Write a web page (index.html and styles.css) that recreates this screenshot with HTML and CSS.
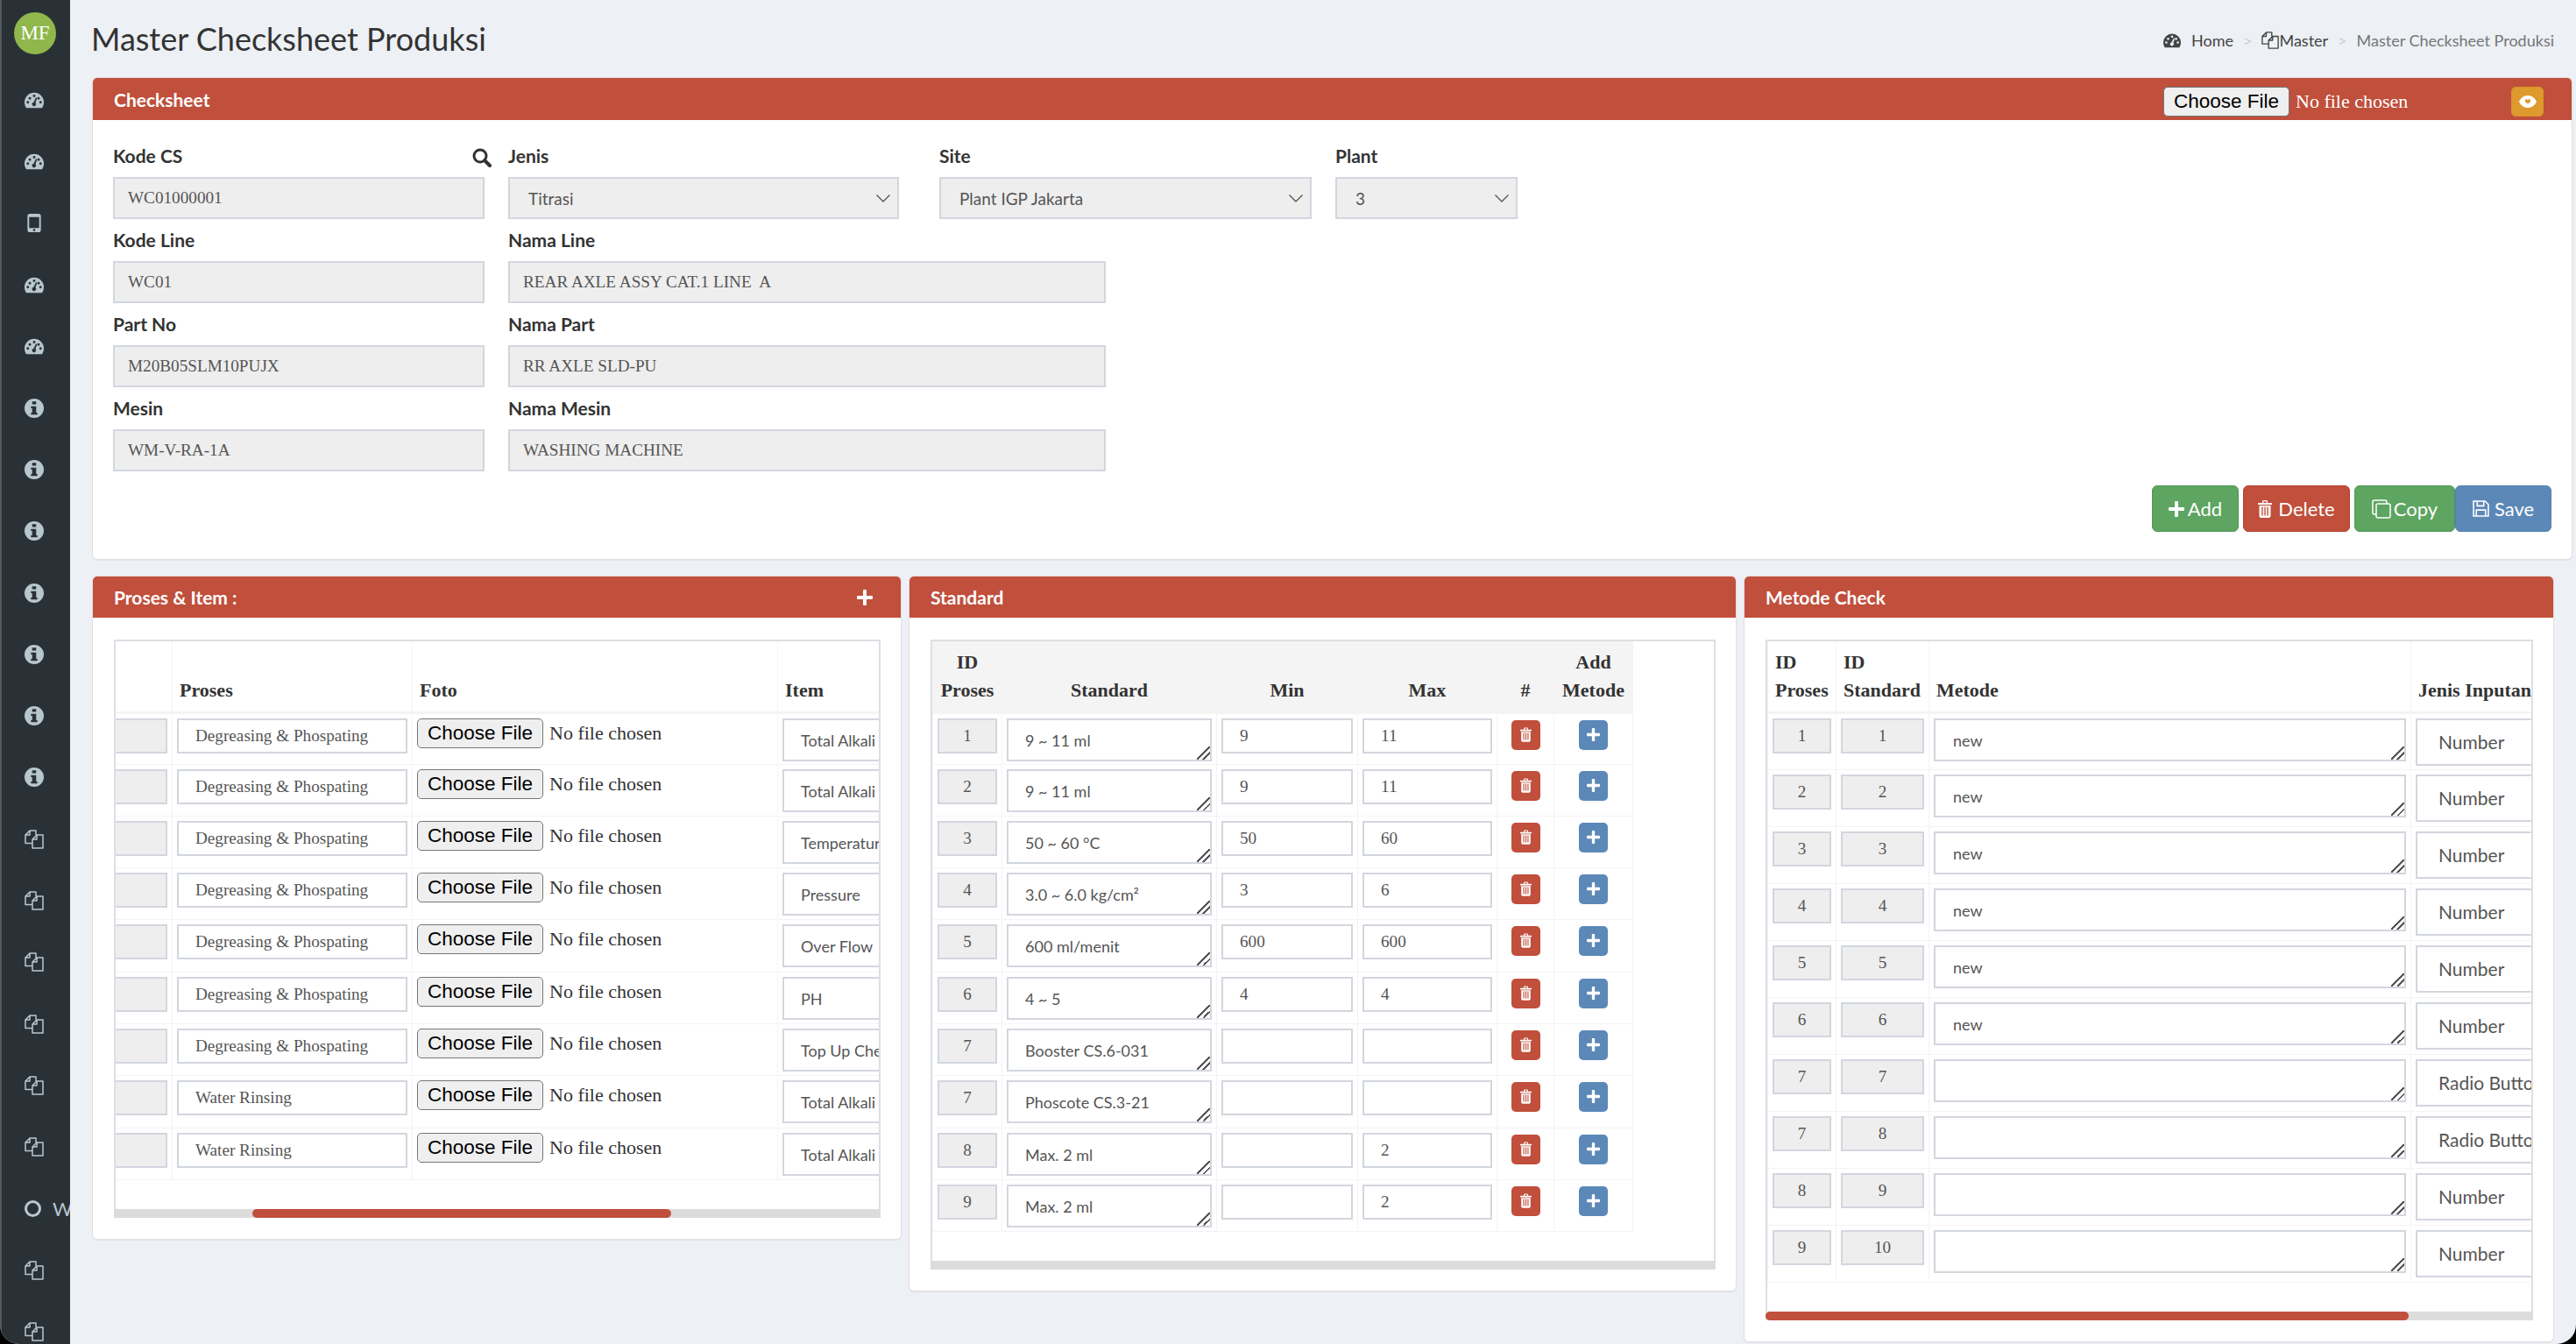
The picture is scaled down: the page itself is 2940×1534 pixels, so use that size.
FILE: index.html
```html
<!DOCTYPE html>
<html lang="en">

<head>
  <meta charset="UTF-8">
  <meta name="viewport" content="width=device-width, initial-scale=1.0">
  <title>Master Checksheet Produksi</title>
  <link rel="stylesheet" href="styles.css">
</head>

<body>
  <svg class="sprite" xmlns="http://www.w3.org/2000/svg">
    <symbol id="i-gauge" viewBox="0 0 24 20">
      <path fill="currentColor" fill-rule="evenodd" d="M12 1A12 12 0 0 0 0 13c0 2.3.6 4.4 1.7 6.3.2.4.6.7 1.100.7h18.400c.5 0 .9-.3 1.100-.7 1.100-1.900 1.700-4 1.700-6.300A12 12 0 0 0 12 1zM2.500 13a1.600 1.600 0 1 0 3.200 0a1.600 1.600 0 1 0-3.200 0zM5 8a1.600 1.600 0 1 0 3.200 0a1.600 1.600 0 1 0-3.200 0zM10.400 5a1.600 1.600 0 1 0 3.200 0a1.600 1.600 0 1 0-3.200 0zM18.300 13a1.600 1.600 0 1 0 3.200 0a1.600 1.600 0 1 0-3.200 0zM15.900 8a1.600 1.600 0 1 0 3.200 0a1.600 1.600 0 1 0-3.200 0zM14.200 7l-2.900 5.900a2.400 2.400 0 1 0 2.300.7L15.700 7.500z" />
    </symbol>
    <symbol id="i-info" viewBox="0 0 24 24">
      <path fill="currentColor" fill-rule="evenodd" d="M12 0a12 12 0 1 0 0 24a12 12 0 1 0 0-24zM9.500 3.500h5V7h-5zM8 9.500h6.500v8H16V20H8v-2.500h1.500v-5.500H8z" />
    </symbol>
    <symbol id="i-mobile" viewBox="0 0 16 22">
      <path fill="currentColor" fill-rule="evenodd" d="M3 0h10a3 3 0 0 1 3 3v16a3 3 0 0 1-3 3H3a3 3 0 0 1-3-3V3a3 3 0 0 1 3-3zM2 4v13h12V4zM6.500 19.500a1.500 1.500 0 1 0 3 0a1.500 1.500 0 1 0-3 0z" />
    </symbol>
    <symbol id="i-files" viewBox="0 0 22 22">
      <path fill="none" stroke="currentColor" stroke-width="1.500" stroke-linejoin="round" d="M9 15.500H1V6l5-5h7v5M6 1v5H1M14 6h7v15H9V11zM14 6v5H9" />
    </symbol>
    <symbol id="i-search" viewBox="0 0 22 22">
      <circle cx="9" cy="9" r="7" fill="none" stroke="currentColor" stroke-width="3" />
      <path d="M14 14l6 6" stroke="currentColor" stroke-width="4" stroke-linecap="round" />
    </symbol>
    <symbol id="i-eye" viewBox="0 0 20 14">
      <path fill="currentColor" fill-rule="evenodd" d="M10 0C5 0 1.500 3.500 0 7c1.500 3.500 5 7 10 7s8.500-3.500 10-7C18.500 3.500 15 0 10 0zM7 6a3 3 0 1 0 6 0a3 3 0 0 0-1.500-2.500a1.500 1.500 0 0 1-3 0A3 3 0 0 0 7 6z" />
    </symbol>
    <symbol id="i-plus" viewBox="0 0 18 18">
      <path fill="currentColor" d="M7 1a1 1 0 0 1 1-1h2a1 1 0 0 1 1 1v6h6a1 1 0 0 1 1 1v2a1 1 0 0 1-1 1h-6v6a1 1 0 0 1-1 1H8a1 1 0 0 1-1-1v-6H1a1 1 0 0 1-1-1V8a1 1 0 0 1 1-1h6z" />
    </symbol>
    <symbol id="i-trash" viewBox="0 0 16 20">
      <path fill="currentColor" fill-rule="evenodd" d="M5 3V1.500C5 .7 5.700 0 6.500 0h3c.8 0 1.500.7 1.500 1.500V3h4.500a.5.5 0 0 1 .5.500V5H0V3.500A.5.5 0 0 1 .5 3zM6.300 3h3.400V1.300H6.300zM1.500 6h13v12c0 1.100-.9 2-2 2h-9c-1.100 0-2-.9-2-2zM4.300 7.500v10h1.400v-10zM7.300 7.500v10h1.400v-10zM10.300 7.500v10h1.400v-10z" />
    </symbol>
    <symbol id="i-copy" viewBox="0 0 22 22">
      <path fill="none" stroke="currentColor" stroke-width="1.500" d="M17 5V3a2 2 0 0 0-2-2H3a2 2 0 0 0-2 2v12a2 2 0 0 0 2 2h2M7 5h12a2 2 0 0 1 2 2v12a2 2 0 0 1-2 2H7a2 2 0 0 1-2-2V7a2 2 0 0 1 2-2z" />
    </symbol>
    <symbol id="i-save" viewBox="0 0 18 18">
      <path fill="none" stroke="currentColor" stroke-width="1.500" d="M1 1h12.500L17 4.500V17H1zM5 1v5h7V1M4 17v-6.500h10V17" />
    </symbol>
  </svg>

  <div class="window">
    <aside class="sidebar">
      <div class="avatar">MF</div>
      <a class="nav-item"><svg class="nav-icon"><use href="#i-gauge" /></svg></a>
      <a class="nav-item"><svg class="nav-icon"><use href="#i-gauge" /></svg></a>
      <a class="nav-item"><svg class="nav-icon nav-icon-phone"><use href="#i-mobile" /></svg></a>
      <a class="nav-item"><svg class="nav-icon"><use href="#i-gauge" /></svg></a>
      <a class="nav-item"><svg class="nav-icon"><use href="#i-gauge" /></svg></a>
      <a class="nav-item"><svg class="nav-icon"><use href="#i-info" /></svg></a>
      <a class="nav-item"><svg class="nav-icon"><use href="#i-info" /></svg></a>
      <a class="nav-item"><svg class="nav-icon"><use href="#i-info" /></svg></a>
      <a class="nav-item"><svg class="nav-icon"><use href="#i-info" /></svg></a>
      <a class="nav-item"><svg class="nav-icon"><use href="#i-info" /></svg></a>
      <a class="nav-item"><svg class="nav-icon"><use href="#i-info" /></svg></a>
      <a class="nav-item"><svg class="nav-icon"><use href="#i-info" /></svg></a>
      <a class="nav-item"><svg class="nav-icon"><use href="#i-files" /></svg></a>
      <a class="nav-item"><svg class="nav-icon"><use href="#i-files" /></svg></a>
      <a class="nav-item"><svg class="nav-icon"><use href="#i-files" /></svg></a>
      <a class="nav-item"><svg class="nav-icon"><use href="#i-files" /></svg></a>
      <a class="nav-item"><svg class="nav-icon"><use href="#i-files" /></svg></a>
      <a class="nav-item"><svg class="nav-icon"><use href="#i-files" /></svg></a>
      <a class="nav-item"><span class="nav-ring"></span><span class="nav-text">Work</span></a>
      <a class="nav-item"><svg class="nav-icon"><use href="#i-files" /></svg></a>
      <a class="nav-item"><svg class="nav-icon"><use href="#i-files" /></svg></a>
    </aside>

    <main class="content">
      <header class="page-head">
        <h1>Master Checksheet Produksi</h1>
        <ol class="breadcrumb">
          <li><svg class="crumb-icon"><use href="#i-gauge" /></svg><a class="crumb-home">Home</a></li>
          <li class="crumb-sep">&gt;</li>
          <li><svg class="crumb-icon crumb-icon-files"><use href="#i-files" /></svg><a>Master</a></li>
          <li class="crumb-sep">&gt;</li>
          <li class="crumb-active">Master Checksheet Produksi</li>
        </ol>
      </header>

      <section class="card card-main">
        <div class="card-head">
          <h2>Checksheet</h2>
          <input class="file-head" type="file">
          <button class="btn-eye" type="button"><svg class="eye-icon"><use href="#i-eye" /></svg></button>
        </div>
        <div class="card-body">
          <form class="form-grid">
            <div class="field">
              <label class="label-search">Kode CS <svg class="search-icon"><use href="#i-search" /></svg></label>
              <input class="ctl ctl-serif" type="text" value="WC01000001" readonly>
            </div>
            <div class="field">
              <label>Jenis</label>
              <select class="ctl ctl-select w-jenis" disabled><option>Titrasi</option></select>
            </div>
            <div class="field">
              <label>Site</label>
              <select class="ctl ctl-select" disabled><option>Plant IGP Jakarta</option></select>
            </div>
            <div class="field">
              <label>Plant</label>
              <select class="ctl ctl-select" disabled><option>3</option></select>
            </div>

            <div class="field">
              <label>Kode Line</label>
              <input class="ctl ctl-serif" type="text" value="WC01" readonly>
            </div>
            <div class="field span-rest">
              <label>Nama Line</label>
              <input class="ctl ctl-serif w-nama" type="text" value="REAR AXLE ASSY CAT.1 LINE  A" readonly>
            </div>

            <div class="field">
              <label>Part No</label>
              <input class="ctl ctl-serif" type="text" value="M20B05SLM10PUJX" readonly>
            </div>
            <div class="field span-rest">
              <label>Nama Part</label>
              <input class="ctl ctl-serif w-nama" type="text" value="RR AXLE SLD-PU" readonly>
            </div>

            <div class="field">
              <label>Mesin</label>
              <input class="ctl ctl-serif" type="text" value="WM-V-RA-1A" readonly>
            </div>
            <div class="field span-rest">
              <label>Nama Mesin</label>
              <input class="ctl ctl-serif w-nama" type="text" value="WASHING MACHINE" readonly>
            </div>
          </form>

          <div class="actions">
            <button class="btn btn-green" type="button"><svg class="btn-icon btn-icon-plus"><use href="#i-plus" /></svg>Add</button>
            <button class="btn btn-red" type="button"><svg class="btn-icon btn-icon-trash"><use href="#i-trash" /></svg>Delete</button>
            <button class="btn btn-green btn-copy" type="button"><svg class="btn-icon btn-icon-copy"><use href="#i-copy" /></svg>Copy</button>
            <button class="btn btn-blue" type="button"><svg class="btn-icon btn-icon-save"><use href="#i-save" /></svg>Save</button>
          </div>
        </div>
      </section>

      <div class="panels">
        <section class="card">
          <div class="card-head card-head-panel">
            <h2>Proses &amp; Item :</h2>
            <svg class="head-plus"><use href="#i-plus" /></svg>
          </div>
          <div class="card-body panel-body">
            <div class="table-frame">
              <div class="table-clip">
                <table class="grid grid-proses">
                  <colgroup>
                    <col class="pc-id"><col class="pc-proses"><col class="pc-foto"><col class="pc-item">
                  </colgroup>
                  <thead>
                    <tr><th></th><th>Proses</th><th>Foto</th><th>Item</th></tr>
                  </thead>
                  <tbody>
                    <tr><td><input class="ctl-sm ctl-ro" readonly></td><td><input class="ctl-sm ctl-proses" value="Degreasing &amp; Phospating" readonly></td><td><input class="file-row" type="file"></td><td><textarea class="ctl-area" readonly>Total Alkali</textarea></td></tr>
                    <tr><td><input class="ctl-sm ctl-ro" readonly></td><td><input class="ctl-sm ctl-proses" value="Degreasing &amp; Phospating" readonly></td><td><input class="file-row" type="file"></td><td><textarea class="ctl-area" readonly>Total Alkali</textarea></td></tr>
                    <tr><td><input class="ctl-sm ctl-ro" readonly></td><td><input class="ctl-sm ctl-proses" value="Degreasing &amp; Phospating" readonly></td><td><input class="file-row" type="file"></td><td><textarea class="ctl-area" readonly>Temperature</textarea></td></tr>
                    <tr><td><input class="ctl-sm ctl-ro" readonly></td><td><input class="ctl-sm ctl-proses" value="Degreasing &amp; Phospating" readonly></td><td><input class="file-row" type="file"></td><td><textarea class="ctl-area" readonly>Pressure</textarea></td></tr>
                    <tr><td><input class="ctl-sm ctl-ro" readonly></td><td><input class="ctl-sm ctl-proses" value="Degreasing &amp; Phospating" readonly></td><td><input class="file-row" type="file"></td><td><textarea class="ctl-area" readonly>Over Flow</textarea></td></tr>
                    <tr><td><input class="ctl-sm ctl-ro" readonly></td><td><input class="ctl-sm ctl-proses" value="Degreasing &amp; Phospating" readonly></td><td><input class="file-row" type="file"></td><td><textarea class="ctl-area" readonly>PH</textarea></td></tr>
                    <tr><td><input class="ctl-sm ctl-ro" readonly></td><td><input class="ctl-sm ctl-proses" value="Degreasing &amp; Phospating" readonly></td><td><input class="file-row" type="file"></td><td><textarea class="ctl-area" readonly>Top Up Chemical</textarea></td></tr>
                    <tr><td><input class="ctl-sm ctl-ro" readonly></td><td><input class="ctl-sm ctl-proses" value="Water Rinsing" readonly></td><td><input class="file-row" type="file"></td><td><textarea class="ctl-area" readonly>Total Alkali</textarea></td></tr>
                    <tr><td><input class="ctl-sm ctl-ro" readonly></td><td><input class="ctl-sm ctl-proses" value="Water Rinsing" readonly></td><td><input class="file-row" type="file"></td><td><textarea class="ctl-area" readonly>Total Alkali</textarea></td></tr>
                  </tbody>
                </table>
              </div>
              <div class="hscroll"><div class="hscroll-thumb thumb-proses"></div></div>
            </div>
          </div>
        </section>

        <section class="card">
          <div class="card-head card-head-panel">
            <h2>Standard</h2>
          </div>
          <div class="card-body panel-body">
            <div class="table-frame">
              <div class="table-clip">
                <table class="grid grid-standard">
                  <colgroup>
                    <col class="sc-id"><col class="sc-std"><col class="sc-min"><col class="sc-max"><col class="sc-del"><col class="sc-add">
                  </colgroup>
                  <thead>
                    <tr><th>ID<br>Proses</th><th>Standard</th><th>Min</th><th>Max</th><th>#</th><th>Add<br>Metode</th></tr>
                  </thead>
                  <tbody>
                    <tr><td><input class="ctl-sm ctl-ro ctl-center" value="1" readonly></td><td><textarea class="ctl-area" readonly>9 ~ 11 ml</textarea></td><td><input class="ctl-sm" value="9"></td><td><input class="ctl-sm" value="11"></td><td class="cell-btn"><button class="btn-sq btn-red" type="button"><svg class="sq-trash"><use href="#i-trash" /></svg></button></td><td class="cell-btn"><button class="btn-sq btn-blue" type="button"><svg class="sq-plus"><use href="#i-plus" /></svg></button></td></tr>
                    <tr><td><input class="ctl-sm ctl-ro ctl-center" value="2" readonly></td><td><textarea class="ctl-area" readonly>9 ~ 11 ml</textarea></td><td><input class="ctl-sm" value="9"></td><td><input class="ctl-sm" value="11"></td><td class="cell-btn"><button class="btn-sq btn-red" type="button"><svg class="sq-trash"><use href="#i-trash" /></svg></button></td><td class="cell-btn"><button class="btn-sq btn-blue" type="button"><svg class="sq-plus"><use href="#i-plus" /></svg></button></td></tr>
                    <tr><td><input class="ctl-sm ctl-ro ctl-center" value="3" readonly></td><td><textarea class="ctl-area" readonly>50 ~ 60 °C</textarea></td><td><input class="ctl-sm" value="50"></td><td><input class="ctl-sm" value="60"></td><td class="cell-btn"><button class="btn-sq btn-red" type="button"><svg class="sq-trash"><use href="#i-trash" /></svg></button></td><td class="cell-btn"><button class="btn-sq btn-blue" type="button"><svg class="sq-plus"><use href="#i-plus" /></svg></button></td></tr>
                    <tr><td><input class="ctl-sm ctl-ro ctl-center" value="4" readonly></td><td><textarea class="ctl-area" readonly>3.0 ~ 6.0 kg/cm²</textarea></td><td><input class="ctl-sm" value="3"></td><td><input class="ctl-sm" value="6"></td><td class="cell-btn"><button class="btn-sq btn-red" type="button"><svg class="sq-trash"><use href="#i-trash" /></svg></button></td><td class="cell-btn"><button class="btn-sq btn-blue" type="button"><svg class="sq-plus"><use href="#i-plus" /></svg></button></td></tr>
                    <tr><td><input class="ctl-sm ctl-ro ctl-center" value="5" readonly></td><td><textarea class="ctl-area" readonly>600 ml/menit</textarea></td><td><input class="ctl-sm" value="600"></td><td><input class="ctl-sm" value="600"></td><td class="cell-btn"><button class="btn-sq btn-red" type="button"><svg class="sq-trash"><use href="#i-trash" /></svg></button></td><td class="cell-btn"><button class="btn-sq btn-blue" type="button"><svg class="sq-plus"><use href="#i-plus" /></svg></button></td></tr>
                    <tr><td><input class="ctl-sm ctl-ro ctl-center" value="6" readonly></td><td><textarea class="ctl-area" readonly>4 ~ 5</textarea></td><td><input class="ctl-sm" value="4"></td><td><input class="ctl-sm" value="4"></td><td class="cell-btn"><button class="btn-sq btn-red" type="button"><svg class="sq-trash"><use href="#i-trash" /></svg></button></td><td class="cell-btn"><button class="btn-sq btn-blue" type="button"><svg class="sq-plus"><use href="#i-plus" /></svg></button></td></tr>
                    <tr><td><input class="ctl-sm ctl-ro ctl-center" value="7" readonly></td><td><textarea class="ctl-area" readonly>Booster CS.6-031</textarea></td><td><input class="ctl-sm"></td><td><input class="ctl-sm"></td><td class="cell-btn"><button class="btn-sq btn-red" type="button"><svg class="sq-trash"><use href="#i-trash" /></svg></button></td><td class="cell-btn"><button class="btn-sq btn-blue" type="button"><svg class="sq-plus"><use href="#i-plus" /></svg></button></td></tr>
                    <tr><td><input class="ctl-sm ctl-ro ctl-center" value="7" readonly></td><td><textarea class="ctl-area" readonly>Phoscote CS.3-21</textarea></td><td><input class="ctl-sm"></td><td><input class="ctl-sm"></td><td class="cell-btn"><button class="btn-sq btn-red" type="button"><svg class="sq-trash"><use href="#i-trash" /></svg></button></td><td class="cell-btn"><button class="btn-sq btn-blue" type="button"><svg class="sq-plus"><use href="#i-plus" /></svg></button></td></tr>
                    <tr><td><input class="ctl-sm ctl-ro ctl-center" value="8" readonly></td><td><textarea class="ctl-area" readonly>Max. 2 ml</textarea></td><td><input class="ctl-sm"></td><td><input class="ctl-sm" value="2"></td><td class="cell-btn"><button class="btn-sq btn-red" type="button"><svg class="sq-trash"><use href="#i-trash" /></svg></button></td><td class="cell-btn"><button class="btn-sq btn-blue" type="button"><svg class="sq-plus"><use href="#i-plus" /></svg></button></td></tr>
                    <tr><td><input class="ctl-sm ctl-ro ctl-center" value="9" readonly></td><td><textarea class="ctl-area" readonly>Max. 2 ml</textarea></td><td><input class="ctl-sm"></td><td><input class="ctl-sm" value="2"></td><td class="cell-btn"><button class="btn-sq btn-red" type="button"><svg class="sq-trash"><use href="#i-trash" /></svg></button></td><td class="cell-btn"><button class="btn-sq btn-blue" type="button"><svg class="sq-plus"><use href="#i-plus" /></svg></button></td></tr>
                  </tbody>
                </table>
              </div>
              <div class="hscroll"></div>
            </div>
          </div>
        </section>

        <section class="card">
          <div class="card-head card-head-panel">
            <h2>Metode Check</h2>
          </div>
          <div class="card-body panel-body">
            <div class="table-frame">
              <div class="table-clip">
                <table class="grid grid-metode">
                  <colgroup>
                    <col class="mc-id"><col class="mc-std"><col class="mc-metode"><col class="mc-jenis">
                  </colgroup>
                  <thead>
                    <tr><th>ID<br>Proses</th><th>ID<br>Standard</th><th>Metode</th><th>Jenis Inputan</th></tr>
                  </thead>
                  <tbody>
                    <tr><td><input class="ctl-sm ctl-ro ctl-center" value="1" readonly></td><td><input class="ctl-sm ctl-ro ctl-center" value="1" readonly></td><td><textarea class="ctl-area" readonly>new</textarea></td><td><select class="ctl-jenis"><option>Number</option></select></td></tr>
                    <tr><td><input class="ctl-sm ctl-ro ctl-center" value="2" readonly></td><td><input class="ctl-sm ctl-ro ctl-center" value="2" readonly></td><td><textarea class="ctl-area" readonly>new</textarea></td><td><select class="ctl-jenis"><option>Number</option></select></td></tr>
                    <tr><td><input class="ctl-sm ctl-ro ctl-center" value="3" readonly></td><td><input class="ctl-sm ctl-ro ctl-center" value="3" readonly></td><td><textarea class="ctl-area" readonly>new</textarea></td><td><select class="ctl-jenis"><option>Number</option></select></td></tr>
                    <tr><td><input class="ctl-sm ctl-ro ctl-center" value="4" readonly></td><td><input class="ctl-sm ctl-ro ctl-center" value="4" readonly></td><td><textarea class="ctl-area" readonly>new</textarea></td><td><select class="ctl-jenis"><option>Number</option></select></td></tr>
                    <tr><td><input class="ctl-sm ctl-ro ctl-center" value="5" readonly></td><td><input class="ctl-sm ctl-ro ctl-center" value="5" readonly></td><td><textarea class="ctl-area" readonly>new</textarea></td><td><select class="ctl-jenis"><option>Number</option></select></td></tr>
                    <tr><td><input class="ctl-sm ctl-ro ctl-center" value="6" readonly></td><td><input class="ctl-sm ctl-ro ctl-center" value="6" readonly></td><td><textarea class="ctl-area" readonly>new</textarea></td><td><select class="ctl-jenis"><option>Number</option></select></td></tr>
                    <tr><td><input class="ctl-sm ctl-ro ctl-center" value="7" readonly></td><td><input class="ctl-sm ctl-ro ctl-center" value="7" readonly></td><td><textarea class="ctl-area" readonly></textarea></td><td><select class="ctl-jenis"><option>Radio Button</option></select></td></tr>
                    <tr><td><input class="ctl-sm ctl-ro ctl-center" value="7" readonly></td><td><input class="ctl-sm ctl-ro ctl-center" value="8" readonly></td><td><textarea class="ctl-area" readonly></textarea></td><td><select class="ctl-jenis"><option>Radio Button</option></select></td></tr>
                    <tr><td><input class="ctl-sm ctl-ro ctl-center" value="8" readonly></td><td><input class="ctl-sm ctl-ro ctl-center" value="9" readonly></td><td><textarea class="ctl-area" readonly></textarea></td><td><select class="ctl-jenis"><option>Number</option></select></td></tr>
                    <tr><td><input class="ctl-sm ctl-ro ctl-center" value="9" readonly></td><td><input class="ctl-sm ctl-ro ctl-center" value="10" readonly></td><td><textarea class="ctl-area" readonly></textarea></td><td><select class="ctl-jenis"><option>Number</option></select></td></tr>
                  </tbody>
                </table>
              </div>
              <div class="hscroll"><div class="hscroll-thumb thumb-metode"></div></div>
            </div>
          </div>
        </section>
      </div>
    </main>
  </div>
</body>

</html>
```
FILE: styles.css
```css
* {
  box-sizing: border-box;
}

html {
  background: #000;
}

body {
  margin: 0;
  height: 100vh;
  overflow: hidden;
  font-family: "Liberation Serif", serif;
  color: #333;
}

.sprite {
  display: none;
}

.window {
  display: flex;
  height: 100%;
  overflow: hidden;
  background: #edf0f5;
  border-radius: 0 0 22px 22px;
}

/* sidebar */
.sidebar {
  flex: 0 0 80px;
  width: 80px;
  padding-top: 14px;
  overflow: hidden;
  background: #2a3136;
  border-left: 2px solid #555a5f;
}

.avatar {
  display: flex;
  justify-content: center;
  align-items: center;
  width: 48px;
  height: 48px;
  margin: 0 0 17px 14px;
  border-radius: 50%;
  background: #8fb74c;
  color: #fff;
  font-size: 23px;
}

.nav-item {
  display: flex;
  align-items: center;
  height: 70.3px;
  padding-left: 26px;
  color: #b8c7ce;
  white-space: nowrap;
}

.nav-icon {
  width: 22px;
  height: 22px;
  flex: none;
}

.nav-icon-phone {
  height: 21px;
}

.nav-ring {
  flex: none;
  width: 19px;
  height: 19px;
  border: 3px solid #b8c7ce;
  border-radius: 50%;
}

.nav-text {
  margin-left: 13px;
  font-family: Lato, sans-serif;
  font-size: 22px;
}

/* page */
.content {
  flex: 1;
  min-width: 0;
  padding: 0 4px 0 25px;
  font-family: Lato, sans-serif;
}

.page-head {
  display: flex;
  justify-content: space-between;
  align-items: center;
  height: 88px;
  padding: 0 21px 0 0;
}

h1 {
  margin: 0 0 0 -1px;
  font-size: 36px;
  font-weight: 400;
  color: #333;
}

.breadcrumb {
  display: flex;
  align-items: center;
  margin: 3px 0 0;
  padding: 0;
  list-style: none;
  font-size: 18px;
  color: #444;
}

.breadcrumb li {
  display: flex;
  align-items: center;
}

.crumb-icon {
  width: 20px;
  height: 18px;
  color: #444;
}

.crumb-icon-files {
  height: 20px;
}

.crumb-home {
  margin-left: 12px;
}

.crumb-sep {
  margin: 0 11px;
  color: #ccc;
}

.crumb-active {
  color: #777;
}

/* cards */
.card {
  background: #fff;
  border: 1px solid #e6dde2;
  border-radius: 6px;
  box-shadow: 0 1px 1px rgba(0, 0, 0, 0.05);
}

.card-main {
  height: 551px;
}

.card-head {
  display: flex;
  align-items: center;
  height: 48px;
  padding: 0 32px 0 24px;
  background: #c04f3c;
  border-radius: 5px 5px 0 0;
  color: #fff;
}

.card-head-panel {
  justify-content: space-between;
  height: 47px;
}

h2 {
  margin: 0;
  font-size: 21px;
  font-weight: 700;
}

.card-main h2 {
  margin-right: auto;
}

.file-head,
.file-row {
  font-family: "Liberation Serif", serif;
  font-size: 22px;
}

.file-head {
  width: 397px;
  margin-top: 6px;
  color: #fff;
}

.file-row {
  display: block;
  width: 400px;
  color: #333;
}

.file-head::file-selector-button,
.file-row::file-selector-button {
  width: 144px;
  height: 34px;
  margin-right: 7px;
  padding: 0;
  border: 1px solid #767676;
  border-radius: 5px;
  background: #efefef;
  color: #000;
  font-family: "Liberation Sans", Arial, sans-serif;
  font-size: 22.500px;
}

.btn-eye {
  display: flex;
  justify-content: center;
  align-items: center;
  width: 37px;
  height: 34px;
  margin-top: 6px;
  padding: 0;
  border: 1px solid #d9942a;
  border-radius: 5px;
  background: #de9a2c;
  color: #fff;
}

.eye-icon {
  width: 20px;
  height: 14px;
}

.head-plus {
  width: 18px;
  height: 18px;
}

.card-body {
  padding: 28px 23px 0 23px;
}

/* top form */
.form-grid {
  display: grid;
  grid-template-columns: 424px 465px 425px 208px;
  column-gap: 27px;
  row-gap: 11px;
}

.span-rest {
  grid-column: span 3;
}

.field label {
  display: flex;
  justify-content: space-between;
  align-items: center;
  height: 24px;
  margin-bottom: 13px;
  font-size: 21px;
  font-weight: 700;
}

.search-icon {
  width: 22px;
  height: 22px;
  margin: 6px -8px 0 0;
  color: #333;
}

.ctl {
  display: block;
  width: 100%;
  height: 48px;
  padding: 0 15px;
  border: 2px solid #d2d6de;
  border-radius: 0;
  background: #eee;
  color: #555;
  outline: none;
}

.ctl-serif {
  font-family: "Liberation Serif", serif;
  font-size: 19.200px;
}

.ctl-select {
  appearance: none;
  padding-left: 21px;
  font-family: Lato, sans-serif;
  font-size: 19px;
  opacity: 1;
  background-image: url("data:image/svg+xml,%3Csvg xmlns='http://www.w3.org/2000/svg' width='16' height='9' viewBox='0 0 16 9'%3E%3Cpath d='M.5.5L8 8l7.500-7.500' fill='none' stroke='%23555' stroke-width='1.300'/%3E%3C/svg%3E");
  background-repeat: no-repeat;
  background-position: right 8px center;
}

.w-jenis {
  width: 446px;
}

.w-nama {
  width: 682px;
}

.actions {
  display: flex;
  justify-content: flex-end;
  gap: 5px;
  margin-top: 16px;
}

.btn {
  display: flex;
  justify-content: center;
  align-items: center;
  gap: 4px;
  height: 53px;
  padding: 0;
  border: 1px solid transparent;
  border-radius: 6px;
  color: #fff;
  font-family: Lato, sans-serif;
  font-size: 22px;
}

.btn-green {
  width: 99px;
  background: #5ea561;
  border-color: #4f9654;
}

.btn-red {
  width: 122px;
  background: #c04f3c;
  border-color: #b2412f;
}

.btn-blue {
  width: 110px;
  background: #5c88b8;
  border-color: #5580ae;
}

.btn-copy {
  width: 115px;
  margin-right: -5px;
  gap: 3px;
}

.btn-icon {
  flex: none;
}

.btn-icon-plus {
  width: 18px;
  height: 18px;
}

.btn-icon-trash {
  width: 16px;
  height: 20px;
  margin-right: 3px;
}

.btn-icon-copy {
  width: 22px;
  height: 22px;
}

.btn-icon-save {
  width: 19px;
  height: 19px;
  margin-right: 2px;
}

/* three panels */
.panels {
  display: grid;
  grid-template-columns: 924px 945px 925px;
  align-items: start;
  column-gap: 8px;
  margin-top: 18px;
}

.panel-body {
  padding: 25px 23px 24px 24px;
}

.table-frame {
  border: 2px solid #dedfe5;
  border-bottom: 0;
}

.table-clip {
  overflow: hidden;
  padding-bottom: 33px;
}

.hscroll {
  height: 10px;
  margin: 0 -2px;
  background: #dcdcdc;
}

.hscroll-thumb {
  height: 10px;
  border-radius: 5px;
  background: #c04f3c;
}

.thumb-proses {
  width: 478px;
  margin-left: 158px;
}

.thumb-metode {
  width: 734px;
}

.grid {
  border-collapse: collapse;
  table-layout: fixed;
}

.grid th {
  height: 81px;
  padding: 0 6px 8px;
  border: 1px solid #f4f4f4;
  border-top: 0;
  border-bottom: 3px solid #f4f4f4;
  font-family: "Liberation Serif", serif;
  font-size: 22px;
  line-height: 32px;
  text-align: left;
  vertical-align: bottom;
  overflow: hidden;
  white-space: nowrap;
}

.grid td {
  height: 59px;
  padding: 5px 5px 0;
  border: 1px solid #f4f4f4;
  vertical-align: top;
}

.grid-proses tr:nth-child(5) td,
.grid-proses tr:nth-child(8) td,
.grid-standard tr:nth-child(5) td,
.grid-standard tr:nth-child(8) td {
  height: 60px;
}

.grid-proses {
  width: 1074px;
  margin-left: -17px;
}

.pc-id {
  width: 81px;
}

.pc-proses {
  width: 274px;
}

.pc-foto {
  width: 417px;
}

.pc-item {
  width: 302px;
}

.grid-proses th {
  padding-left: 8px;
}

.grid-standard {
  width: 799px;
}

.grid-standard th {
  background: #f4f4f4;
  border-color: #f4f4f4;
  text-align: center;
}

.sc-id {
  width: 79px;
}

.sc-std {
  width: 245px;
}

.sc-min {
  width: 161px;
}

.sc-max {
  width: 159px;
}

.sc-del {
  width: 65px;
}

.sc-add {
  width: 90px;
}

.grid-metode {
  width: 1034px;
}

.grid-metode td {
  height: 65px;
}

.grid-metode th {
  padding-left: 8px;
}

.grid-metode .ctl-area {
  padding-left: 20px;
}

.mc-id {
  width: 78px;
}

.mc-std {
  width: 106px;
}

.mc-metode {
  width: 550px;
}

.mc-jenis {
  width: 300px;
}

/* table controls */
.ctl-sm,
.ctl-area,
.ctl-jenis {
  display: block;
  width: 100%;
  border: 2px solid #d2d6de;
  border-radius: 0;
  background: #fff;
  color: #555;
  outline: none;
}

.ctl-sm {
  height: 40px;
  padding: 0 19px;
  font-family: "Liberation Serif", serif;
  font-size: 19.200px;
}

.ctl-ro {
  background: #eee;
}

.ctl-center {
  padding: 0;
  text-align: center;
}

.ctl-area {
  height: 49px;
  padding: 11px 19px 0;
  overflow: hidden;
  font-family: Lato, sans-serif;
  font-size: 18px;
  line-height: 24px;
}

.ctl-area::-webkit-resizer {
  background: linear-gradient(135deg, transparent 46%, #555 46%, #555 54%, transparent 54%, transparent 70%, #555 70%, #555 78%, transparent 78%);
}

.ctl-jenis {
  appearance: none;
  height: 54px;
  padding-left: 24px;
  font-family: Lato, sans-serif;
  font-size: 21px;
}

.cell-btn {
  text-align: center;
}

.btn-sq {
  display: inline-flex;
  justify-content: center;
  align-items: center;
  width: 33px;
  height: 34px;
  margin-top: 2px;
  padding: 0;
  border: 1px solid transparent;
  border-radius: 5px;
  color: #fff;
}

.sq-trash {
  width: 13px;
  height: 17px;
}

.sq-plus {
  width: 15px;
  height: 15px;
}
```
